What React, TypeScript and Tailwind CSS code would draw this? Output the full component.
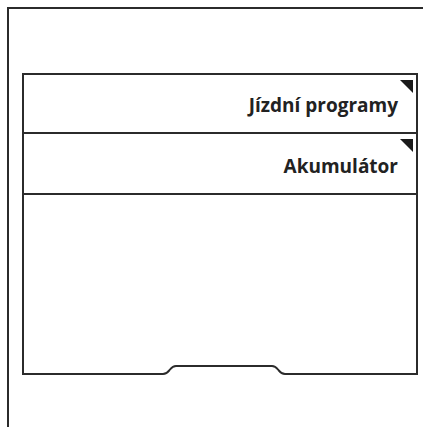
import * as React from 'react';

const Corner: React.FC = () => (
  <svg width="13" height="13" viewBox="0 0 13 13" className="absolute right-[3px] top-[5px]">
    <polygon points="0,0 13,0 13,13" fill="#1a1a1a" />
  </svg>
);

const Row: React.FC<{ label: string; h: string }> = ({ label, h }) => (
  <div className={`relative border-b-2 border-[#2b2b2b] ${h} flex items-end justify-end pr-[18px] pb-[15px]`}>
    <Corner />
    <span className="text-[19px] font-bold text-[#222] leading-[24px]">{label}</span>
  </div>
);

const App: React.FC = () => {
  return (
    <div
      className="w-[424px] h-[427px] overflow-hidden bg-white pl-[7px] pt-[7px]"
      style={{ fontFamily: '"Open Sans", "Noto Sans", sans-serif' }}
    >
      <div className="w-[416px] h-full border-l-2 border-t-2 border-[#2b2b2b] pt-[64px] pl-[13px]">
        {/* Panel */}
        <div className="relative w-[396px] h-[302px] border-2 border-[#2b2b2b]">
          <Row label="Jízdní programy" h="h-[59px]" />
          <Row label="Akumulátor" h="h-[61px]" />

          {/* bottom notch */}
          <svg
            width="128"
            height="14"
            viewBox="0 0 128 14"
            className="absolute bottom-[-2px] left-[136px]"
          >
            <rect x="0" y="10" width="128" height="4" fill="#fff" />
            <path
              d="M0 13 H3 C7 13 8 11 10 8.5 C12 6 13 5 16 5 H112 C115 5 116 6 118 8.5 C120 11 121 13 125 13 H128"
              fill="none"
              stroke="#2b2b2b"
              strokeWidth="2"
            />
          </svg>
        </div>
      </div>
    </div>
  );
};

export default App;
